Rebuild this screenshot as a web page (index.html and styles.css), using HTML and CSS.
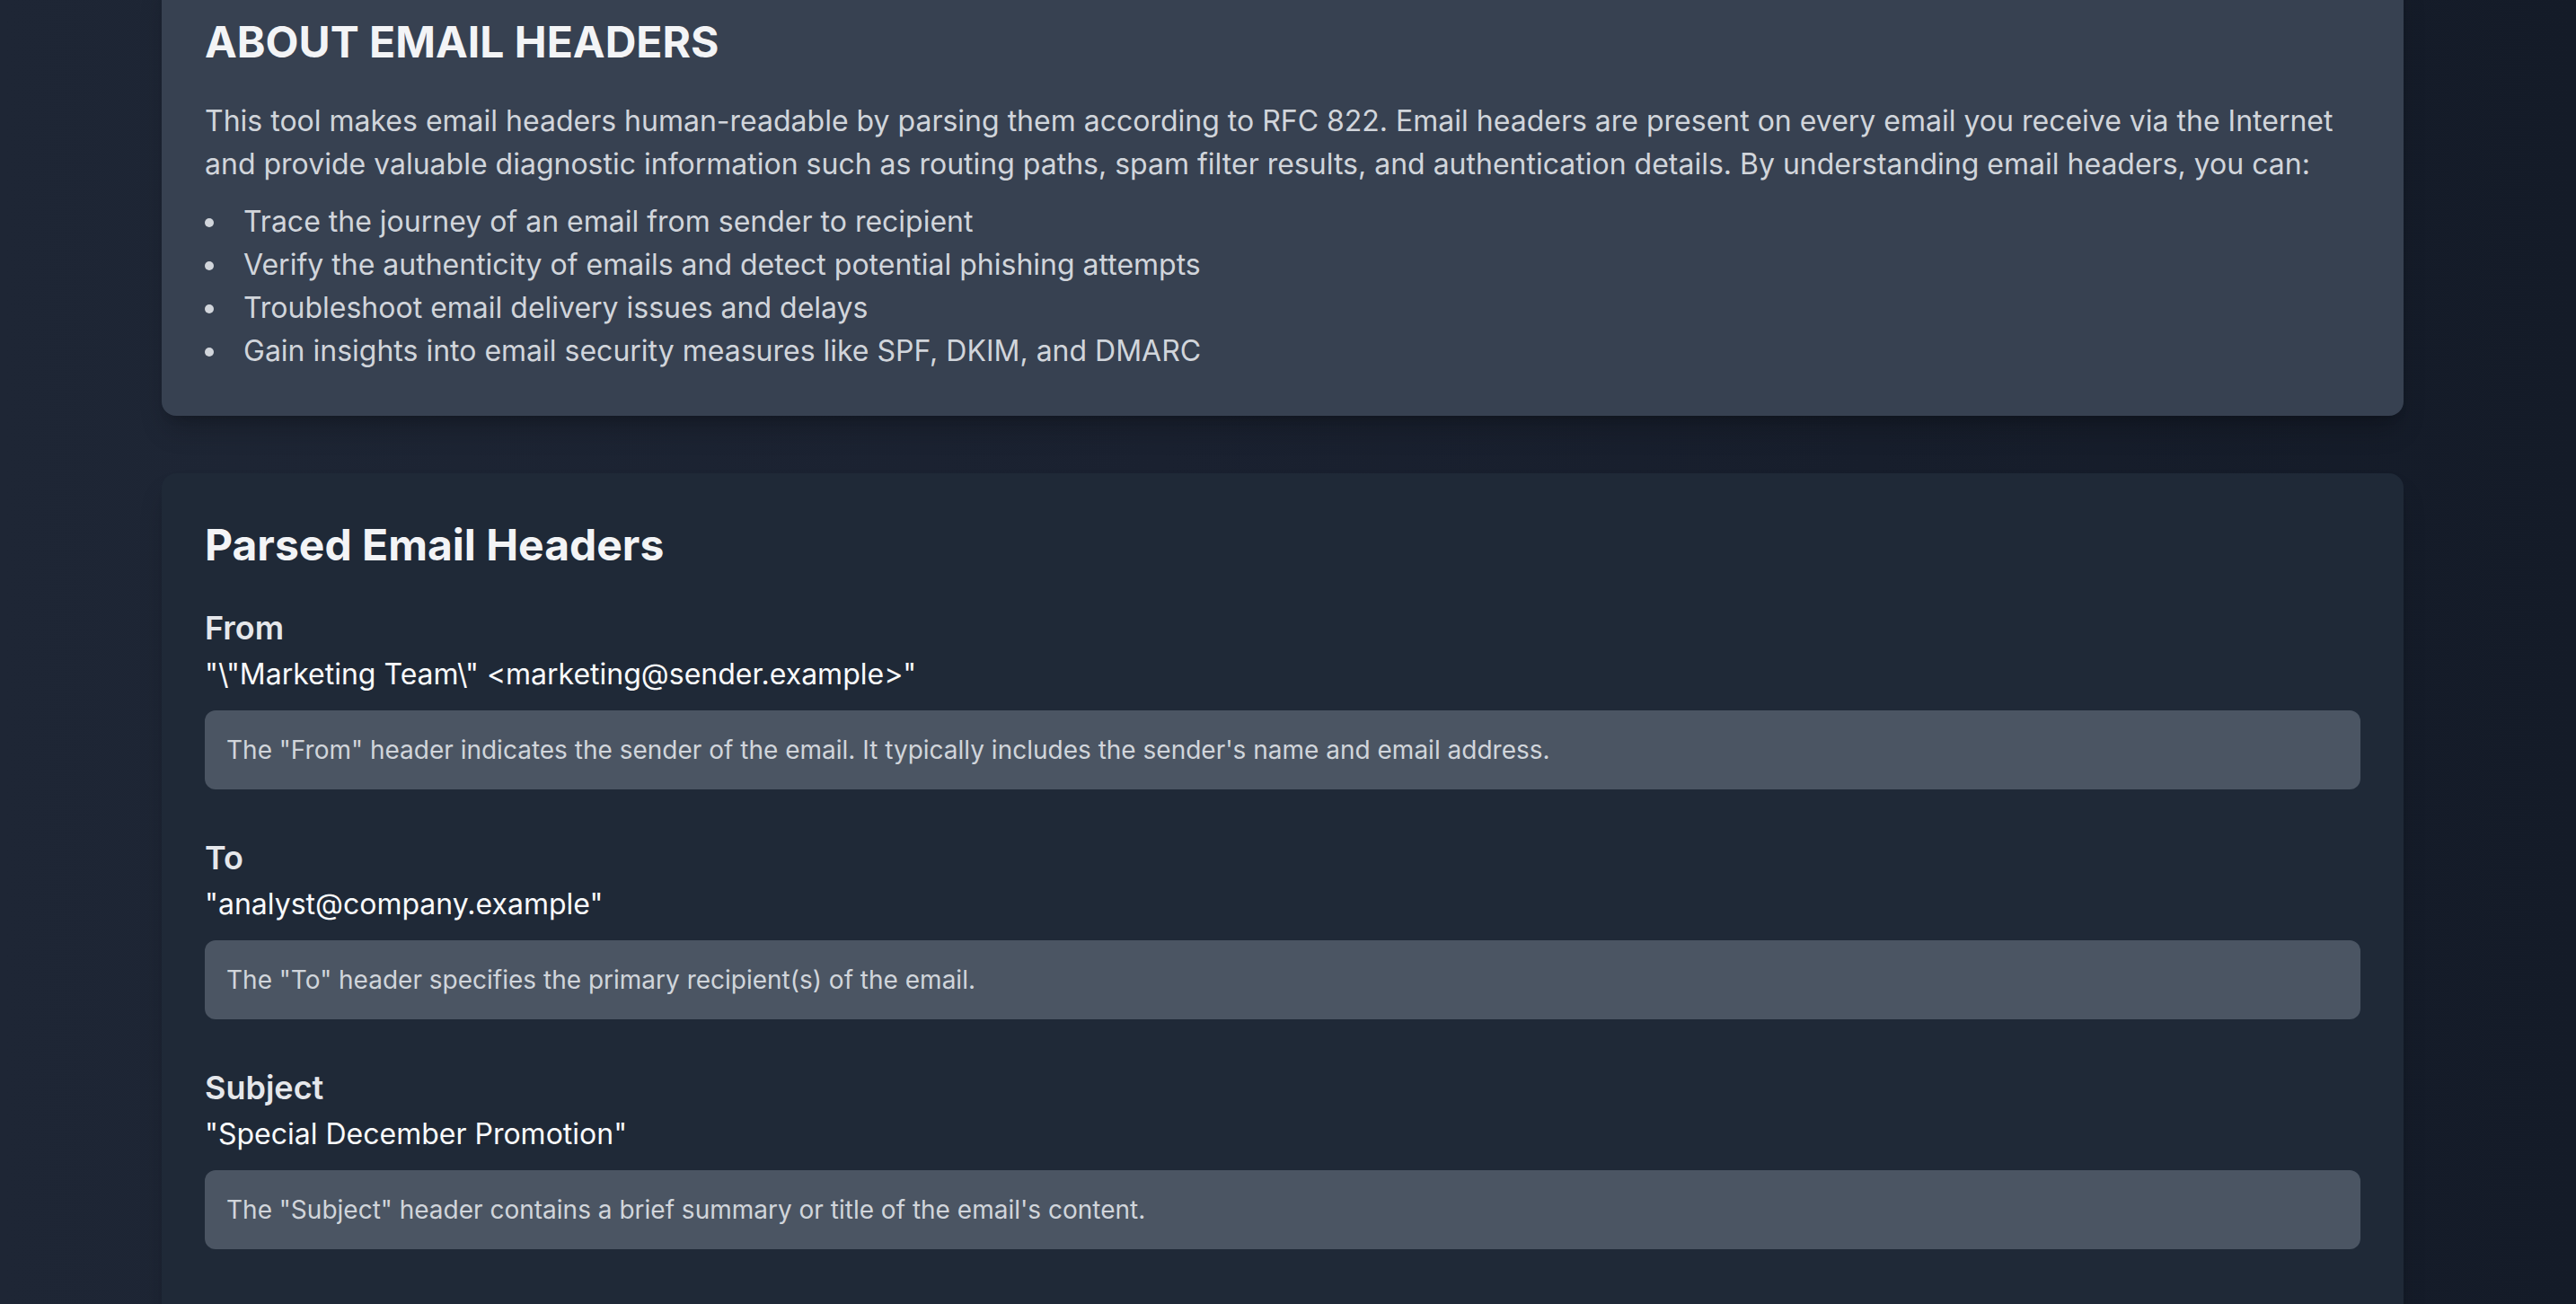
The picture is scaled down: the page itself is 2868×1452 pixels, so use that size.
FILE: index.html
```html
<!DOCTYPE html>
<html lang="en">
<head>
<meta charset="utf-8">
<title>Email Header Analyzer</title>
<link rel="stylesheet" href="styles.css">
</head>
<body>
<main class="page">
  <section class="card card-about">
    <h2 class="card-title">ABOUT EMAIL HEADERS</h2>
    <p class="about-text">This tool makes email headers human-readable by parsing them according to RFC 822. Email headers are present on every email you receive via the Internet and provide valuable diagnostic information such as routing paths, spam filter results, and authentication details. By understanding email headers, you can:</p>
    <ul class="about-list">
      <li>Trace the journey of an email from sender to recipient</li>
      <li>Verify the authenticity of emails and detect potential phishing attempts</li>
      <li>Troubleshoot email delivery issues and delays</li>
      <li>Gain insights into email security measures like SPF, DKIM, and DMARC</li>
    </ul>
  </section>

  <section class="card card-parsed">
    <h2 class="card-title">Parsed Email Headers</h2>
    <div class="header-list">
      <div class="header-item">
        <h3 class="header-name">From</h3>
        <p class="header-value">"\"Marketing Team\" &lt;marketing@sender.example&gt;"</p>
        <div class="header-desc">The "From" header indicates the sender of the email. It typically includes the sender's name and email address.</div>
      </div>
      <div class="header-item">
        <h3 class="header-name">To</h3>
        <p class="header-value">"analyst@company.example"</p>
        <div class="header-desc">The "To" header specifies the primary recipient(s) of the email.</div>
      </div>
      <div class="header-item">
        <h3 class="header-name">Subject</h3>
        <p class="header-value">"Special December Promotion"</p>
        <div class="header-desc">The "Subject" header contains a brief summary or title of the email's content.</div>
      </div>
    </div>
  </section>
</main>
</body>
</html>
```

FILE: styles.css
```css
* {
  box-sizing: border-box;
}

html, body {
  margin: 0;
  padding: 0;
}

body {
  font-family: Inter, "Noto Sans", "Liberation Sans", sans-serif;
  background: linear-gradient(90deg, #1e2635 0%, #1a2130 45%, #141b28 100%);
  background-attachment: fixed;
  color: #f3f4f6;
  min-height: 100vh;
  overflow: hidden;
  height: 1452px;
  padding-right: 12px;
}

.page {
  max-width: 2560px;
  margin: -33px auto 0;
  padding: 0 32px;
  display: flex;
  flex-direction: column;
  gap: 64px;
}

.card {
  border-radius: 16px;
  padding: 48px;
  box-shadow: 0 20px 30px -6px rgba(0, 0, 0, 0.22), 0 8px 12px -8px rgba(0, 0, 0, 0.2);
}

.card-about {
  background: #374151;
}

.card-parsed {
  background: #1f2937;
  padding-bottom: 80px;
}

.card-title {
  margin: 0 0 32px;
  font-size: 48px;
  line-height: 64px;
  font-weight: 700;
  color: #f3f4f6;
}

.about-text {
  margin: 0 0 16px;
  font-size: 32px;
  line-height: 48px;
  color: #d1d5db;
}

.about-list {
  margin: 0;
  padding: 0;
  list-style: disc inside;
  font-size: 32px;
  line-height: 48px;
  color: #d1d5db;
}

.header-list {
  display: flex;
  flex-direction: column;
  gap: 48px;
}

.header-name {
  margin: 0;
  font-size: 36px;
  line-height: 56px;
  font-weight: 600;
  color: #e5e7eb;
}

.header-value {
  margin: 0;
  font-size: 32px;
  line-height: 48px;
  color: #f9fafb;
}

.header-desc {
  margin-top: 16px;
  padding: 24px;
  background: #4b5563;
  border-radius: 12px;
  font-size: 28px;
  line-height: 40px;
  color: #d1d5db;
}
```
